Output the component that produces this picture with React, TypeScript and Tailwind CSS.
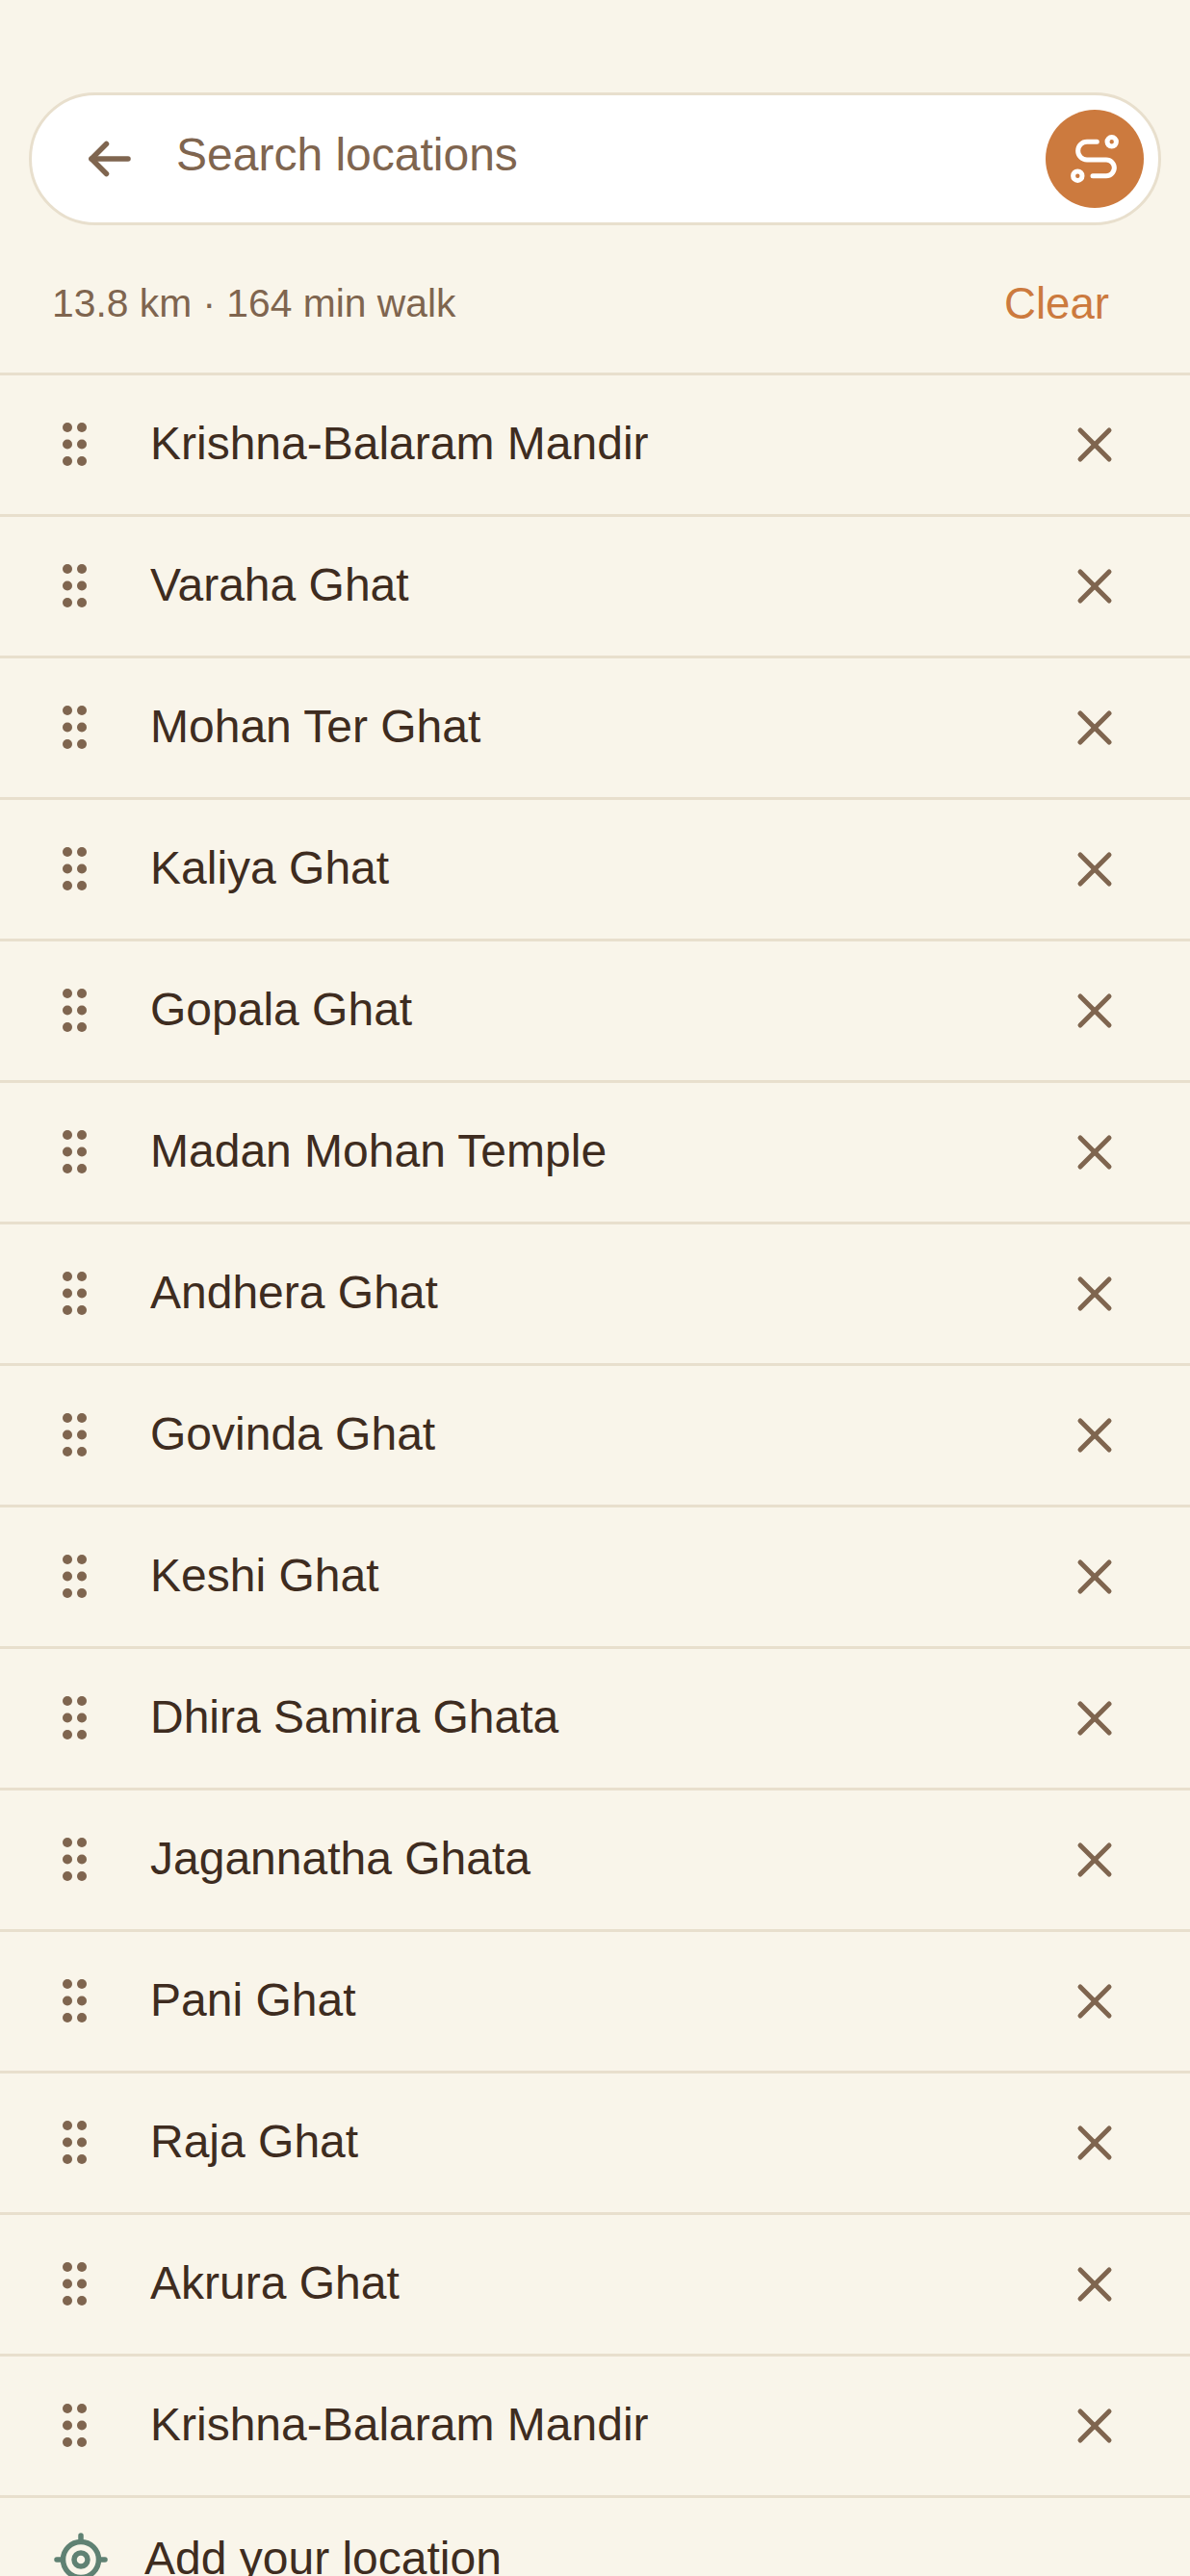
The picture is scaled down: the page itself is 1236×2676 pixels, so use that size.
import { X } from 'lucide-react';

const stops = [
  'Krishna-Balaram Mandir',
  'Varaha Ghat',
  'Mohan Ter Ghat',
  'Kaliya Ghat',
  'Gopala Ghat',
  'Madan Mohan Temple',
  'Andhera Ghat',
  'Govinda Ghat',
  'Keshi Ghat',
  'Dhira Samira Ghata',
  'Jagannatha Ghata',
  'Pani Ghat',
  'Raja Ghat',
  'Akrura Ghat',
  'Krishna-Balaram Mandir',
];

function DragHandle() {
  return (
    <svg width="25" height="45" viewBox="0 0 25 45" className="mb-[1px] shrink-0" fill="#7f654f">
      <circle cx="5" cy="5" r="5" />
      <circle cx="20" cy="5" r="5" />
      <circle cx="5" cy="22.5" r="5" />
      <circle cx="20" cy="22.5" r="5" />
      <circle cx="5" cy="40" r="5" />
      <circle cx="20" cy="40" r="5" />
    </svg>
  );
}

function BackArrow() {
  return (
    <svg width="60" height="60" viewBox="0 0 60 60" fill="none" stroke="#7f654f" strokeWidth="5.5" strokeLinecap="round" strokeLinejoin="round" className="shrink-0">
      <path d="M14 30h38" />
      <path d="M29.5 14.5 14 30l15.5 15.5" />
    </svg>
  );
}

function RouteIcon() {
  return (
    <svg width="66" height="66" viewBox="0 0 66 66" fill="none" stroke="#ffffff" strokeWidth="5" strokeLinecap="round">
      <path d="M35.3 15.3H25a9.35 9.35 0 0 0 0 18.7h20a8.35 8.35 0 0 1 0 16.7H31" />
      <circle cx="50.7" cy="15.3" r="4.7" />
      <circle cx="15.3" cy="50.7" r="4.7" />
    </svg>
  );
}

function LocationIcon() {
  return (
    <svg width="66" height="66" viewBox="0 0 66 66" fill="none" stroke="#5f8173" strokeWidth="5.5" strokeLinecap="round" className="shrink-0">
      <circle cx="33" cy="33" r="18.5" />
      <circle cx="33" cy="33" r="7" />
      <path d="M33 8v4M33 54v4M8 33h4M54 33h4" />
    </svg>
  );
}

export default function App() {
  return (
    <div className="h-[2676px] overflow-hidden bg-[#f9f5ea] font-['Liberation_Sans',sans-serif]">
      <div className="px-[30px] pt-[96px]">
        <div className="flex h-[138px] items-center rounded-full border-[3px] border-[#e8dfcd] bg-white pl-[48px] pr-[15px]">
          <BackArrow />
          <span className="mb-[8px] ml-[42px] flex-1 text-[48px] leading-none text-[#7f654f]">Search locations</span>
          <div className="flex h-[102px] w-[102px] items-center justify-center rounded-full bg-[#cc7a3e]">
            <RouteIcon />
          </div>
        </div>
      </div>
      <div className="flex h-[153px] items-center justify-between pl-[54px] pr-[84px] pt-[10px]">
        <span className="text-[40.8px] leading-none text-[#7f654f]">13.8 km · 164 min walk</span>
        <span className="text-[45.6px] leading-none text-[#cc7a3e]">Clear</span>
      </div>
      <div>
        {stops.map((stop, i) => (
          <div key={i} className="flex h-[147px] items-center border-t-[3px] border-[#e8dfcd] pl-[65px] pr-[69px]">
            <DragHandle />
            <span className="mb-[2px] ml-[66px] flex-1 text-[48px] leading-none text-[#3e2c20]">{stop}</span>
            <X size={60} color="#7f654f" strokeWidth={2} className="shrink-0" />
          </div>
        ))}
        <div className="flex h-[131px] items-center border-t-[3px] border-[#e8dfcd] pl-[51px]">
          <LocationIcon />
          <span className="mb-[2px] ml-[33px] text-[48px] leading-none text-[#3e2c20]">Add your location</span>
        </div>
      </div>
    </div>
  );
}
